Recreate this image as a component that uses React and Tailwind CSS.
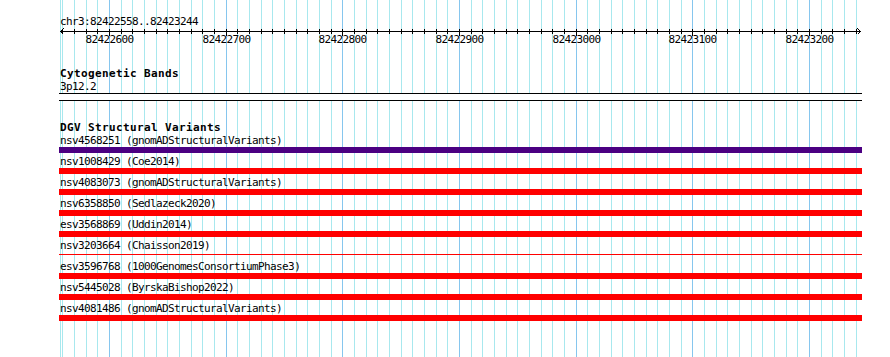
// ===== Imports =====
import React from "react";

// ===== Data =====
const START = 82422558;
const END = 82423244;

// pixel x of a base position (100 bp = 116.67 px, 82422600 sits at x=109)
const toX = (pos) => Math.round(109 + ((pos - 82422600) * 7) / 6);

const gridPositions = [];
for (let p = 82422560; p <= 82423240; p += 10) gridPositions.push(p);

const majorLabels = [
  82422600, 82422700, 82422800, 82422900, 82423000, 82423100, 82423200,
];

const variants = [
  { id: "nsv4568251", study: "gnomADStructuralVariants", color: "bg-[#4b0082]" },
  { id: "nsv1008429", study: "Coe2014", color: "bg-[#ff0000]" },
  { id: "nsv4083073", study: "gnomADStructuralVariants", color: "bg-[#ff0000]" },
  { id: "nsv6358850", study: "Sedlazeck2020", color: "bg-[#ff0000]" },
  { id: "esv3568869", study: "Uddin2014", color: "bg-[#ff0000]" },
  { id: "nsv3203664", study: "Chaisson2019", color: "bg-[#ff0000]", thin: true },
  { id: "esv3596768", study: "1000GenomesConsortiumPhase3", color: "bg-[#ff0000]" },
  { id: "nsv5445028", study: "ByrskaBishop2022", color: "bg-[#ff0000]" },
  { id: "nsv4081486", study: "gnomADStructuralVariants", color: "bg-[#ff0000]" },
];

// ===== Pieces =====
const GridLines = () => (
  <div className="absolute inset-0 pointer-events-none">
    <div className="absolute top-0 bottom-0 w-px bg-[#a8e8ee]" style={{ left: 60 }} />
    {gridPositions.map((p) => (
      <div
        key={p}
        className={`absolute top-0 bottom-0 w-px ${
          p % 100 === 0 ? "bg-[#86c6ee]" : "bg-[#a8e8ee]"
        }`}
        style={{ left: toX(p) }}
      />
    ))}
  </div>
);

const Ruler = () => (
  <svg width="890" height="22" className="block" shapeRendering="crispEdges">
    <line x1="60" y1="3.5" x2="861" y2="3.5" stroke="#000" strokeWidth="1" />
    <polyline points="63.5,0.5 60.5,3.5 63.5,6.5" fill="none" stroke="#000" strokeWidth="1" />
    <polyline points="857.5,0.5 860.5,3.5 857.5,6.5" fill="none" stroke="#000" strokeWidth="1" />
    {gridPositions.map((p) => (
      <line
        key={p}
        x1={toX(p) + 0.5}
        y1="1"
        x2={toX(p) + 0.5}
        y2={p % 100 === 0 ? 8 : 6}
        stroke="#000"
        strokeWidth="1"
      />
    ))}
    {majorLabels.map((p) => (
      <text
        key={p}
        x={toX(p) + 0.5}
        y="15"
        textAnchor="middle"
        fontSize="11"
        letterSpacing="-0.62"
        fontFamily="'DejaVu Sans Mono', 'Liberation Mono', monospace"
        fill="#000"
      >
        {p}
      </text>
    ))}
  </svg>
);

const VariantRow = ({ id, study, color, thin }) => (
  <div className="mb-[2px]">
    <div className="pl-px leading-[13px] h-[13px] whitespace-nowrap">
      {id} ({study})
    </div>
    {thin ? (
      <div className="h-[6px] pt-[2px]">
        <div className={`h-px w-[803px] ${color}`} />
      </div>
    ) : (
      <div className={`h-[6px] w-[803px] ${color}`} />
    )}
  </div>
);

// ===== Component =====
const App = () => {
  return (
    <div className="relative w-[890px] h-[357px] bg-white overflow-hidden text-black text-[11px] tracking-[-0.62px] font-['DejaVu_Sans_Mono','Liberation_Mono',monospace]">
      <GridLines />

      <div className="relative">
        {/* ruler */}
        <div className="pt-[15px] pl-[60px] leading-[13px] h-[28px]">
          chr3:{START}..{END}
        </div>
        <Ruler />

        {/* cytogenetic bands */}
        <div className="pl-[59px] mt-[17px]">
          <div className="pl-px leading-[13px] font-bold tracking-[0.38px]">
            Cytogenetic Bands
          </div>
          <div className="pl-px leading-[13px]">3p12.2</div>
          <div className="w-[803px] h-[8px] border-y border-black bg-white" />
        </div>

        {/* DGV */}
        <div className="pl-[59px] mt-[20px]">
          <div className="pl-px leading-[13px] font-bold tracking-[0.38px]">
            DGV Structural Variants
          </div>
          {variants.map((v) => (
            <VariantRow key={v.id} {...v} />
          ))}
        </div>
      </div>
    </div>
  );
};

export default App;
